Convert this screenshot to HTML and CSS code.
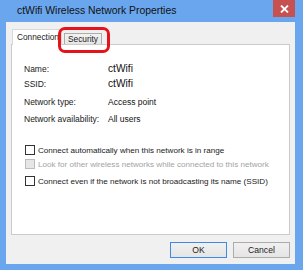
FILE: index.html
```html
<!DOCTYPE html>
<html>
<head>
<meta charset="utf-8">
<link rel="stylesheet" href="styles.css">
</head>
<body>
<div class="window">
  <div class="titlebar">
    <span class="title">ctWifi Wireless Network Properties</span>
    <span class="close">
      <svg width="9" height="8" viewBox="0 0 9 8"><path d="M1 0.5 L8 7.5 M8 0.5 L1 7.5" stroke="#fff" stroke-width="1.8"/></svg>
    </span>
  </div>
  <div class="client">
    <div class="tabs">
      <div class="tab active">Connection</div>
      <div class="tab">Security</div>
    </div>
    <div class="panel">
      <div class="props">
        <span class="label">Name:</span><span class="value big">ctWifi</span>
        <span class="label">SSID:</span><span class="value big">ctWifi</span>
        <span class="label">Network type:</span><span class="value">Access point</span>
        <span class="label">Network availability:</span><span class="value">All users</span>
      </div>
      <div class="checks">
        <div class="check"><span class="box"></span><span>Connect automatically when this network is in range</span></div>
        <div class="check disabled"><span class="box"></span><span>Look for other wireless networks while connected to this network</span></div>
        <div class="check third"><span class="box"></span><span>Connect even if the network is not broadcasting its name (SSID)</span></div>
      </div>
    </div>
    <div class="buttons">
      <div class="btn default">OK</div>
      <div class="btn">Cancel</div>
    </div>
  </div>
  <div class="highlight"></div>
</div>
</body>
</html>
```

FILE: styles.css
```css
* { box-sizing: border-box; }
html, body { margin: 0; padding: 0; }
body {
  width: 303px;
  height: 270px;
  overflow: hidden;
  background: #6aa6ee;
  font-family: "Liberation Sans", Arial, sans-serif;
  color: #1a1a1a;
}
.window {
  position: relative;
  width: 303px;
  height: 270px;
  display: flex;
  flex-direction: column;
}
.titlebar {
  height: 22px;
  display: flex;
  align-items: flex-start;
  padding-left: 17px;
}
.title {
  font-size: 10.4px;
  line-height: 22px;
  color: #111;
}
.close {
  margin-left: auto;
  margin-right: 8px;
  width: 22px;
  height: 17px;
  background: #c75050;
  display: flex;
  align-items: center;
  justify-content: center;
}
.client {
  flex: 1;
  margin: 0 8px 6px 6px;
  background: #f0f0f0;
  padding: 7px 5px 6px 5px;
  display: flex;
  flex-direction: column;
}
.tabs {
  display: flex;
  align-items: flex-end;
  height: 15px;
  padding-left: 1px;
  position: relative;
  z-index: 1;
}
.tab {
  font-size: 8.3px;
  height: 11px;
  line-height: 10px;
  padding: 0 3px;
  border: 1px solid #acacac;
  border-bottom: none;
  background: linear-gradient(#f2f2f2, #e6e6e6);
  margin-left: 2px;
  white-space: nowrap;
}
.tab.active {
  height: 16px;
  margin-bottom: -1px;
  margin-left: 0;
  background: #fff;
  border-color: #d9d9d9;
  padding: 2px 2px 0 4px;
  line-height: 11px;
  width: 50px;
  overflow: hidden;
}
.panel {
  flex: 1;
  background: #fff;
  border: 1px solid #cbcbcb;
  padding: 17px 12px 0 12px;
}
.props {
  display: grid;
  grid-template-columns: 84px auto;
  grid-template-rows: 14px 16px 19px 16px;
  align-items: center;
  font-size: 8.5px;
}
.value { color: #111; }
.value.big { font-size: 10.2px; margin-top: -2px; }
.checks {
  margin-top: 16px;
  margin-left: 1px;
  font-size: 8.1px;
  white-space: nowrap;
}
.check {
  display: flex;
  align-items: center;
  height: 14px;
}
.check.third { margin-top: 3px; }
.box {
  width: 10px;
  height: 10px;
  border: 1px solid #333;
  background: #fff;
  margin-right: 3px;
  flex: none;
}
.check.disabled { color: #a3a3a3; }
.check.disabled .box { border-color: #bcbcbc; background: #e6e6e6; }
.buttons {
  display: flex;
  justify-content: flex-end;
  gap: 6px;
  margin-top: 7px;
}
.btn {
  width: 57px;
  height: 16px;
  border: 1px solid #acacac;
  background: linear-gradient(#f0f0f0, #e5e5e5);
  font-size: 8.6px;
  display: flex;
  align-items: center;
  justify-content: center;
}
.btn.default { border-color: #3c8ae6; }
.highlight {
  position: absolute;
  left: 58px;
  top: 27px;
  width: 52px;
  height: 26px;
  border: 3px solid #e3141b;
  border-radius: 7px;
  z-index: 5;
}
```
